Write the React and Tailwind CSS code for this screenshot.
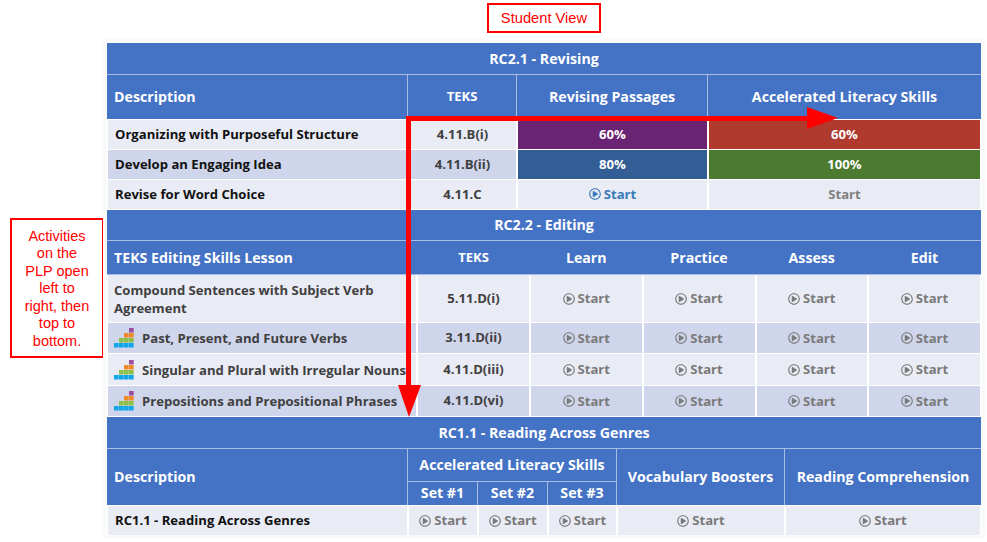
import React from "react";
import { FaRegPlayCircle } from "react-icons/fa";

function Stairs() {
  const rows = [
    { y: 0, x: [15], fill: "#9b4f9f" },
    { y: 5, x: [10, 15], fill: "#ee8a2c" },
    { y: 10, x: [5, 10, 15], fill: "#8cc04b" },
    { y: 15, x: [0, 5, 10, 15], fill: "#12a5e8" },
  ];
  return (
    <svg width="20" height="20" viewBox="0 0 20 20" className="shrink-0">
      {rows.map((r) =>
        r.x.map((x) => <rect key={`${r.y}-${x}`} x={x} y={r.y} width="4.7" height="4.5" fill={r.fill} />)
      )}
    </svg>
  );
}

function Start({ tone = "text-[#7a7a7a]", icon = true }) {
  return (
    <span className={`inline-flex items-center gap-[3px] font-bold ${tone}`}>
      {icon && <FaRegPlayCircle className="text-[12px]" />}
      Start
    </span>
  );
}

const hd = "flex items-center justify-center bg-[#4472c4] text-white font-bold border-l border-[#a9bde3] pb-px";
const cell = "flex items-center justify-center border-l-2 border-white";

function Title({ children, className }) {
  return (
    <div className={`flex items-center justify-center bg-[#4472c4] text-white font-bold text-[14.2px] ${className}`}>
      {children}
    </div>
  );
}

function Row1({ label, teks, bg, a, b }) {
  return (
    <div className={`ml-px mr-px mb-px grid h-[29px] grid-cols-[299px_109px_191px_273px] ${bg}`}>
      <div className="flex items-center pl-[7px] font-bold text-[#111]">{label}</div>
      <div className={`${cell} font-bold text-[#404040]`}>{teks}</div>
      {a}
      {b}
    </div>
  );
}

function Row2({ label, teks, bg, icon, h }) {
  return (
    <div className={`ml-px mr-px mb-px grid grid-cols-[308px_113px_112.5px_113px_112.5px_113px] ${h} ${bg}`}>
      <div className="flex items-center gap-[8px] pl-[6px] font-bold leading-[18px] whitespace-nowrap text-[#404040]">
        {icon && <Stairs />}
        <span>{label}</span>
      </div>
      <div className={`${cell} font-bold text-[#404040]`}>{teks}</div>
      {[0, 1, 2, 3].map((i) => (
        <div key={i} className={`${cell} pt-px`}>
          <Start />
        </div>
      ))}
    </div>
  );
}

export default function App() {
  return (
    <div className="relative flex h-[542px] w-[987px] overflow-hidden bg-white font-['Open_Sans',sans-serif] text-[13.1px]">
      <div className="w-[107px] shrink-0 pl-[10px] pt-[218px]">
        <div className="flex h-[140px] w-[94px] items-center justify-center border-2 border-[#ff0000] pt-[2px] text-center font-['Liberation_Sans',sans-serif] text-[14.5px] leading-[17.5px] text-[#ff0000]">
          <p>
            Activities
            <br />
            on the
            <br />
            PLP open
            <br />
            left to
            <br />
            right, then
            <br />
            top to
            <br />
            bottom.
          </p>
        </div>
      </div>
      <div className="w-[874px] pt-[3px]">
        <div className="mb-[10px] ml-[380px] flex h-[30px] w-[114px] items-center justify-center border-2 border-[#ff0000] font-['Liberation_Sans',sans-serif] text-[14.7px] text-[#ff0000]">
          Student View
        </div>

        <div className="ring-4 ring-[#fafafa]">
          <Title className="h-[32px] border-b border-[#a9bde3]">RC2.1 - Revising</Title>
          <div className="grid h-[45px] grid-cols-[300px_109px_191px_274px] border-b border-white bg-[#4472c4] text-[14.2px]">
            <div className="flex items-center bg-[#4472c4] pb-px pl-[7px] font-bold text-white">Description</div>
            <div className={`${hd} text-[13px]`}>TEKS</div>
            <div className={hd}>Revising Passages</div>
            <div className={hd}>Accelerated Literacy Skills</div>
          </div>
          <Row1
            label="Organizing with Purposeful Structure"
            teks="4.11.B(i)"
            bg="bg-[#e9ebf5]"
            a={<div className={`${cell} bg-[#6b2474] font-bold text-white`}>60%</div>}
            b={<div className={`${cell} bg-[#b03a2e] font-bold text-white`}>60%</div>}
          />
          <Row1
            label="Develop an Engaging Idea"
            teks="4.11.B(ii)"
            bg="bg-[#cfd5ea]"
            a={<div className={`${cell} bg-[#335d95] font-bold text-white`}>80%</div>}
            b={<div className={`${cell} bg-[#4b7a30] font-bold text-white`}>100%</div>}
          />
          <Row1
            label="Revise for Word Choice"
            teks="4.11.C"
            bg="bg-[#e9ebf5]"
            a={
              <div className={cell}>
                <Start tone="text-[#3a7ab8]" />
              </div>
            }
            b={
              <div className={cell}>
                <Start icon={false} tone="text-[#808080]" />
              </div>
            }
          />

          <Title className="h-[31px] border-b border-[#a9bde3] pb-px">RC2.2 - Editing</Title>
          <div className="grid h-[34px] grid-cols-[310px_113px_112.5px_113px_112.5px_113px] border-b border-[#a9bde3] bg-[#4472c4] font-bold text-white">
            <div className="flex items-center pl-[7px] text-[14.2px]">TEKS Editing Skills Lesson</div>
            <div className="flex items-center justify-center text-[13px]">TEKS</div>
            <div className="flex items-center justify-center text-[14.2px]">Learn</div>
            <div className="flex items-center justify-center text-[14.2px]">Practice</div>
            <div className="flex items-center justify-center text-[14.2px]">Assess</div>
            <div className="flex items-center justify-center text-[14.2px]">Edit</div>
          </div>
          <Row2
            label={
              <>
                Compound Sentences with Subject Verb
                <br />
                Agreement
              </>
            }
            teks="5.11.D(i)"
            bg="bg-[#e9ebf5]"
            h="h-[47px]"
          />
          <Row2 icon label="Past, Present, and Future Verbs" teks="3.11.D(ii)" bg="bg-[#cfd5ea]" h="h-[30px]" />
          <Row2 icon label="Singular and Plural with Irregular Nouns" teks="4.11.D(iii)" bg="bg-[#e9ebf5]" h="h-[31px]" />
          <Row2 icon label="Prepositions and Prepositional Phrases" teks="4.11.D(vi)" bg="bg-[#cfd5ea]" h="h-[30px]" />

          <Title className="h-[32px] border-b border-[#a9bde3]">RC1.1 - Reading Across Genres</Title>
          <div className="grid h-[57px] grid-cols-[300px_70px_70px_69px_168px_197px] grid-rows-[33px_23px] border-b border-white bg-[#4472c4] text-[14.2px] font-bold text-white">
            <div className="row-span-2 flex items-center pb-px pl-[7px]">Description</div>
            <div className={`${hd} col-span-3 border-b`}>Accelerated Literacy Skills</div>
            <div className={`${hd} row-span-2`}>Vocabulary Boosters</div>
            <div className={`${hd} row-span-2`}>Reading Comprehension</div>
            <div className={hd}>Set #1</div>
            <div className={hd}>Set #2</div>
            <div className={hd}>Set #3</div>
          </div>
          <div className="ml-px mr-px grid h-[29px] grid-cols-[299px_70px_70px_69px_168px_196px] bg-[#e9ebf5]">
            <div className="flex items-center pl-[7px] font-bold text-[#111]">RC1.1 - Reading Across Genres</div>
            {[0, 1, 2, 3, 4].map((i) => (
              <div key={i} className={`${cell} pt-px`}>
                <Start />
              </div>
            ))}
          </div>
        </div>
      </div>

      <svg width="987" height="542" viewBox="0 0 987 542" className="pointer-events-none absolute left-0 top-0">
        <rect x="406" y="116" width="402" height="5" fill="#ff0000" />
        <polygon points="807,107 838,118 807,129" fill="#ff0000" />
        <rect x="406" y="116" width="5" height="270" fill="#ff0000" />
        <polygon points="398,385 421,385 409,417" fill="#ff0000" />
      </svg>
    </div>
  );
}
